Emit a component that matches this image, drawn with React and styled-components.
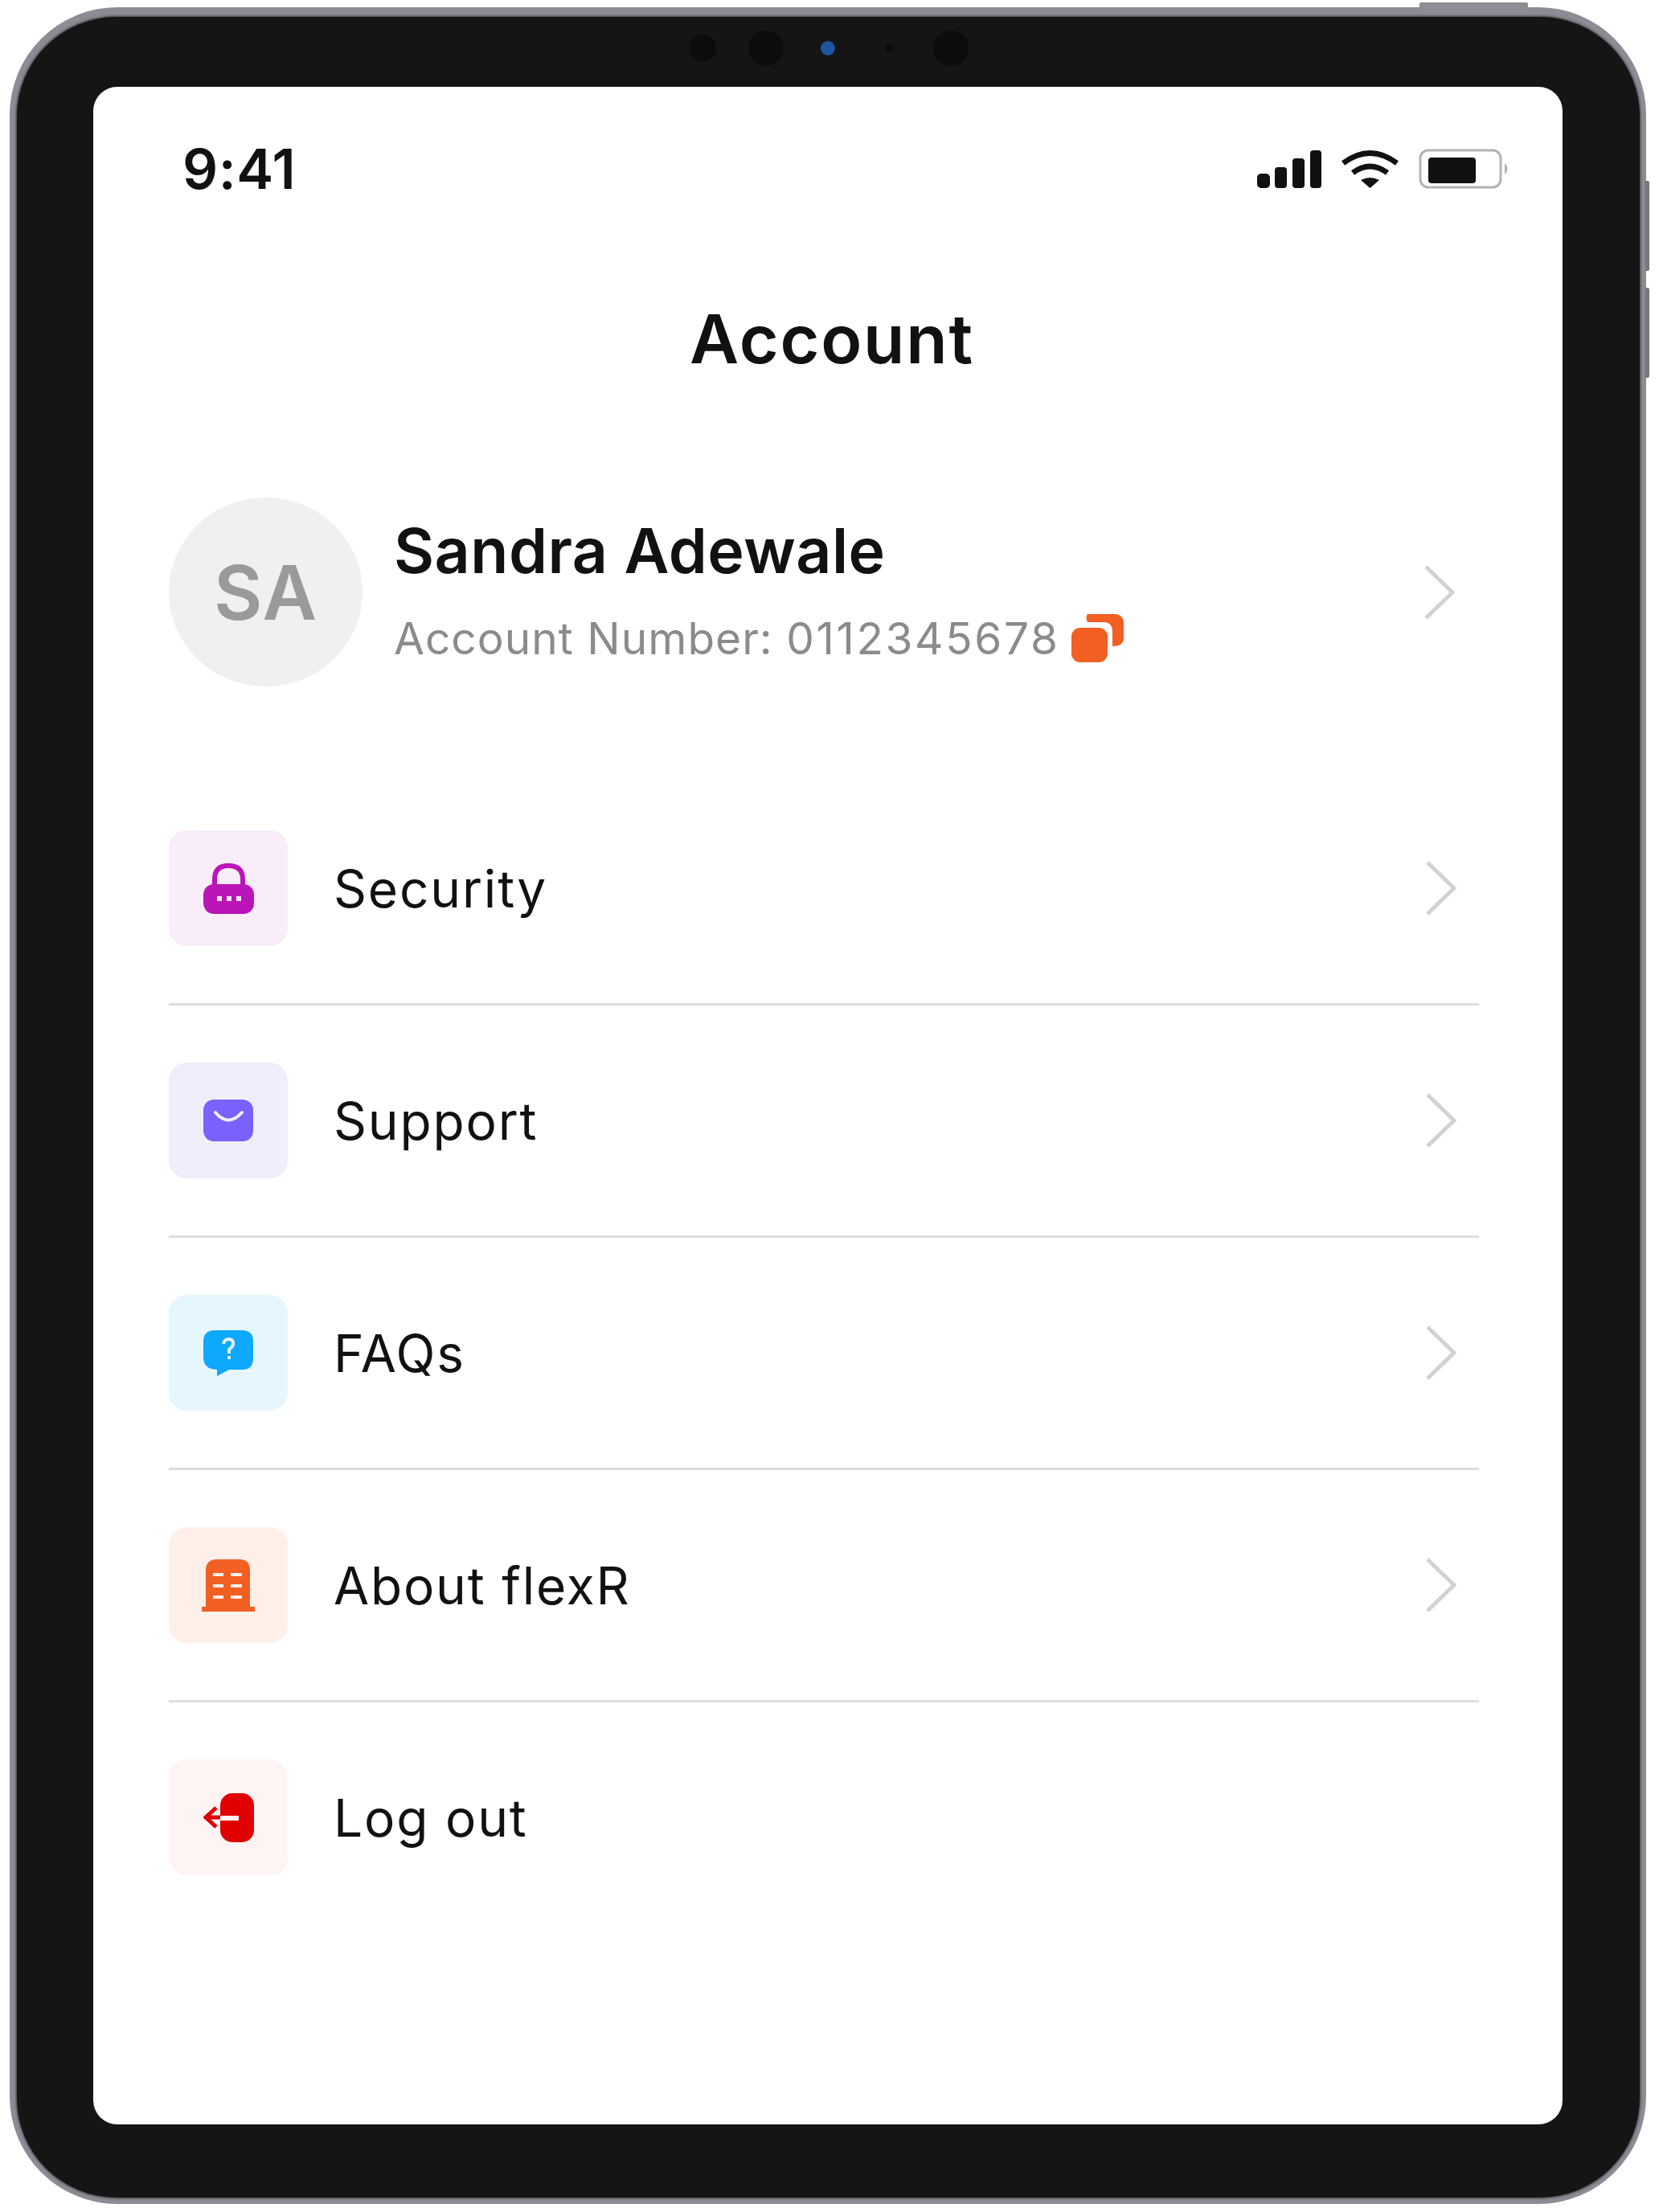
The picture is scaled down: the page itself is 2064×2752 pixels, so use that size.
import React from "react";
import styled, { createGlobalStyle } from "styled-components";

const GlobalStyle = createGlobalStyle`
    html, body {
        margin: 0;
        padding: 0;
        background: #fff;
    }
    * {
        box-sizing: border-box;
    }
`;

const font = `Inter, "Liberation Sans", sans-serif`;

const Device = styled.div`
    position: relative;
    margin: 9px 0 0 12px;
    width: 2036px;
    height: 2733px;
    padding: 12px 8px 8px 9px;
    border-radius: 134px;
    background: #8c8c94;
`;

const TopButton = styled.div`
    position: absolute;
    top: -6px;
    left: 1754px;
    width: 135px;
    height: 8px;
    border-radius: 2px 2px 0 0;
    background: #8f8f93;
`;

const SideButton = styled.div`
    position: absolute;
    right: -4px;
    top: ${(p) => p.$top}px;
    width: 5px;
    height: 112px;
    border-radius: 0 2px 2px 0;
    background: #77777d;
`;

const Bezel = styled.div`
    display: flex;
    flex-direction: column;
    height: 100%;
    padding: 0 96px 91px 95px;
    border-radius: 124px;
    background: #151515;
    box-shadow: 0 0 3px 1px #3a3a3e;
`;

const Sensors = styled.div`
    flex: 0 0 87px;
    display: flex;
    align-items: center;
    padding: 0 0 10px 741px;
`;

const Sensor = styled.span`
    flex: none;
    width: ${(p) => p.$size}px;
    height: ${(p) => p.$size}px;
    margin-right: ${(p) => p.$gap}px;
    border-radius: 50%;
    background: ${(p) => p.$color || "#0c0c0c"};
`;

const Screen = styled.main`
    flex: 1;
    display: flex;
    flex-direction: column;
    border-radius: 30px;
    background: #fff;
    font-family: ${font};
    color: #111;
`;

const StatusBar = styled.div`
    display: flex;
    align-items: center;
    justify-content: space-between;
    height: 50px;
    margin-top: 77px;
    padding: 0 65px 0 111px;
`;

const Time = styled.span`
    font-size: 69px;
    line-height: 50px;
    font-weight: 600;
    letter-spacing: 0.5px;
`;

const StatusIcons = styled.div`
    display: flex;
    align-items: center;
    gap: 25px;
`;

const Title = styled.h1`
    margin: 132px 0 0 10px;
    font-size: 84px;
    line-height: 110px;
    font-weight: 600;
    letter-spacing: 1.8px;
    text-align: center;
`;

const Profile = styled.section`
    display: flex;
    align-items: center;
    margin: 142px 0 0 94px;
    padding-right: 28px;
    width: 1628px;
`;

const Avatar = styled.div`
    flex: none;
    display: flex;
    align-items: center;
    justify-content: center;
    width: 241px;
    height: 235px;
    border-radius: 50%;
    background: #f1efef;
    color: #9a9a9a;
    font-size: 93px;
    font-weight: 600;
    letter-spacing: 1px;
`;

const ProfileText = styled.div`
    flex: 1;
    margin-left: 39px;
    padding-bottom: 6px;
`;

const Name = styled.div`
    font-size: 77px;
    line-height: 90px;
    font-weight: 600;
    letter-spacing: 0.5px;
`;

const AccountRow = styled.div`
    display: flex;
    align-items: center;
    gap: 14px;
    margin-top: 31px;
    color: #8b8b8b;
    font-size: 55px;
    line-height: 66px;
    letter-spacing: 1px;
    white-space: pre;
`;

const AccountDigits = styled.span`
    letter-spacing: 2.6px;
`;

const Menu = styled.nav`
    margin: 108px 0 0 94px;
    width: 1630px;
`;

const Row = styled.div`
    display: flex;
    align-items: center;
    padding: 71px 28px 71px 0;
    border-bottom: ${(p) => (p.$last ? "none" : "3px solid #dfdddd")};
`;

const Tile = styled.div`
    flex: none;
    display: flex;
    align-items: center;
    justify-content: center;
    width: 148px;
    height: 144px;
    border-radius: 22px;
    background: ${(p) => p.$bg};
    color: ${(p) => p.$color};
`;

const Label = styled.span`
    flex: 1;
    margin-left: 57px;
    font-size: 64px;
    letter-spacing: 1.8px;
`;

const Chevron = () => (
    <svg width="38" height="68" viewBox="0 0 38 68" fill="none">
        <path d="M2 2 L35 34 L2 66" stroke="#d2d2d2" strokeWidth="5" />
    </svg>
);

const SignalIcon = () => (
    <svg width="80" height="47" viewBox="0 0 80 47" fill="#111">
        <rect x="0" y="29" width="16" height="18" rx="5" />
        <rect x="22" y="21" width="15" height="26" rx="4" />
        <rect x="44" y="10" width="15" height="37" rx="4" />
        <rect x="66" y="0" width="14" height="47" rx="4" />
    </svg>
);

const WifiIcon = () => (
    <svg width="71" height="48" viewBox="0 0 71 48" fill="none" stroke="#111" strokeWidth="7">
        <path d="M2 17 Q35.5 -8 69 17" />
        <path d="M14 29 Q35.5 13 57 29" />
        <path d="M24 38 Q35.5 32 47 38 L35.5 48 Z" fill="#111" stroke="none" />
    </svg>
);

const BatteryIcon = () => (
    <svg width="114" height="50" viewBox="0 0 114 50" fill="none">
        <rect x="2" y="2" width="100" height="46" rx="10" stroke="#b3b3b3" strokeWidth="3" />
        <rect x="12" y="11" width="59" height="32" rx="4" fill="#111" />
        <path d="M107 18 Q114 25 107 32 Z" fill="#b3b3b3" />
    </svg>
);

const CopyIcon = () => (
    <svg width="65" height="60" viewBox="0 0 65 60" fill="#f25f22">
        <rect x="0" y="17" width="45" height="43" rx="11" />
        <path d="M20 0 H53 Q65 0 65 12 V30 Q65 40 51 40 V22 Q51 10 40 10 H20 Q17 4 20 0 Z" />
    </svg>
);

const LockIcon = ({ hole }) => (
    <svg width="63" height="63" viewBox="0 0 63 63" fill="currentColor">
        <path d="M14 30 V20 Q14 3 31 3 Q49 3 49 20 V30" fill="none" stroke="currentColor" strokeWidth="6" />
        <rect x="0" y="26" width="63" height="37" rx="13" />
        <rect x="17" y="41" width="6" height="6" fill={hole} />
        <rect x="29" y="41" width="6" height="6" fill={hole} />
        <rect x="41" y="41" width="6" height="6" fill={hole} />
    </svg>
);

const MailIcon = ({ hole }) => (
    <svg width="62" height="52" viewBox="0 0 62 52" fill="currentColor">
        <rect x="0" y="0" width="62" height="52" rx="13" />
        <path d="M15 16 Q31 35 48 16" fill="none" stroke={hole} strokeWidth="4" strokeLinecap="round" />
    </svg>
);

const BubbleIcon = ({ hole }) => (
    <svg width="62" height="57" viewBox="0 0 62 57" fill="currentColor">
        <path d="M14 0 H48 Q62 0 62 14 V35 Q62 49 48 49 H32 L17 57 V49 Q0 49 0 33 V14 Q0 0 14 0 Z" />
        <path d="M25 17 Q26 11 32 11 Q38 12 37 18 Q36 21 32 24 V29" fill="none" stroke={hole} strokeWidth="4" />
        <rect x="30" y="32" width="4" height="4" fill={hole} />
    </svg>
);

const BuildingIcon = ({ hole }) => (
    <svg width="66" height="65" viewBox="0 0 66 65" fill="currentColor">
        <path d="M5 60 V14 Q5 0 19 0 H47 Q60 0 60 14 V60 Z" />
        <rect x="0" y="59" width="66" height="6" />
        {[17, 31, 45].map((y) => (
            <g key={y} fill={hole}>
                <rect x="14" y={y} width="13" height="4" />
                <rect x="36" y={y} width="14" height="4" />
            </g>
        ))}
    </svg>
);

const LogoutIcon = ({ hole }) => (
    <svg width="63" height="61" viewBox="0 0 63 61" fill="currentColor">
        <rect x="21" y="0" width="42" height="61" rx="15" />
        <path d="M16 18 L3 30 L16 42 M3 30 H22" fill="none" stroke="currentColor" strokeWidth="5" />
        <rect x="21" y="28" width="23" height="6" fill={hole} />
    </svg>
);

const items = [
    { label: "Security", Icon: LockIcon, bg: "#f9edf9", color: "#bb14b8" },
    { label: "Support", Icon: MailIcon, bg: "#f1eefb", color: "#7b61ff" },
    { label: "FAQs", Icon: BubbleIcon, bg: "#e6f6ff", color: "#0ea8ff" },
    { label: "About flexR", Icon: BuildingIcon, bg: "#feefe9", color: "#f25f22" },
    { label: "Log out", Icon: LogoutIcon, bg: "#fdf4f3", color: "#e00000", last: true },
];

const App = () => {
    return (
        <>
            <GlobalStyle />
            <Device>
                <TopButton />
                <SideButton $top={216} />
                <SideButton $top={349} />
                <Bezel>
                    <Sensors>
                        <Sensor $size={34} $gap={40} />
                        <Sensor $size={44} $gap={46} />
                        <Sensor $size={18} $gap={62} $color="#1d55a0" />
                        <Sensor $size={10} $gap={50} />
                        <Sensor $size={44} $gap={0} />
                    </Sensors>
                    <Screen>
                        <StatusBar>
                            <Time>9:41</Time>
                            <StatusIcons>
                                <SignalIcon />
                                <WifiIcon />
                                <BatteryIcon />
                            </StatusIcons>
                        </StatusBar>
                        <Title>Account</Title>
                        <Profile>
                            <Avatar>SA</Avatar>
                            <ProfileText>
                                <Name>Sandra Adewale</Name>
                                <AccountRow>
                                    <span>
                                        Account Number: <AccountDigits>0112345678</AccountDigits>
                                    </span>
                                    <CopyIcon />
                                </AccountRow>
                            </ProfileText>
                            <Chevron />
                        </Profile>
                        <Menu>
                            {items.map(({ label, Icon, bg, color, last }) => (
                                <Row key={label} $last={last}>
                                    <Tile $bg={bg} $color={color}>
                                        <Icon hole={bg} />
                                    </Tile>
                                    <Label>{label}</Label>
                                    {!last && <Chevron />}
                                </Row>
                            ))}
                        </Menu>
                    </Screen>
                </Bezel>
            </Device>
        </>
    );
};

export default App;
